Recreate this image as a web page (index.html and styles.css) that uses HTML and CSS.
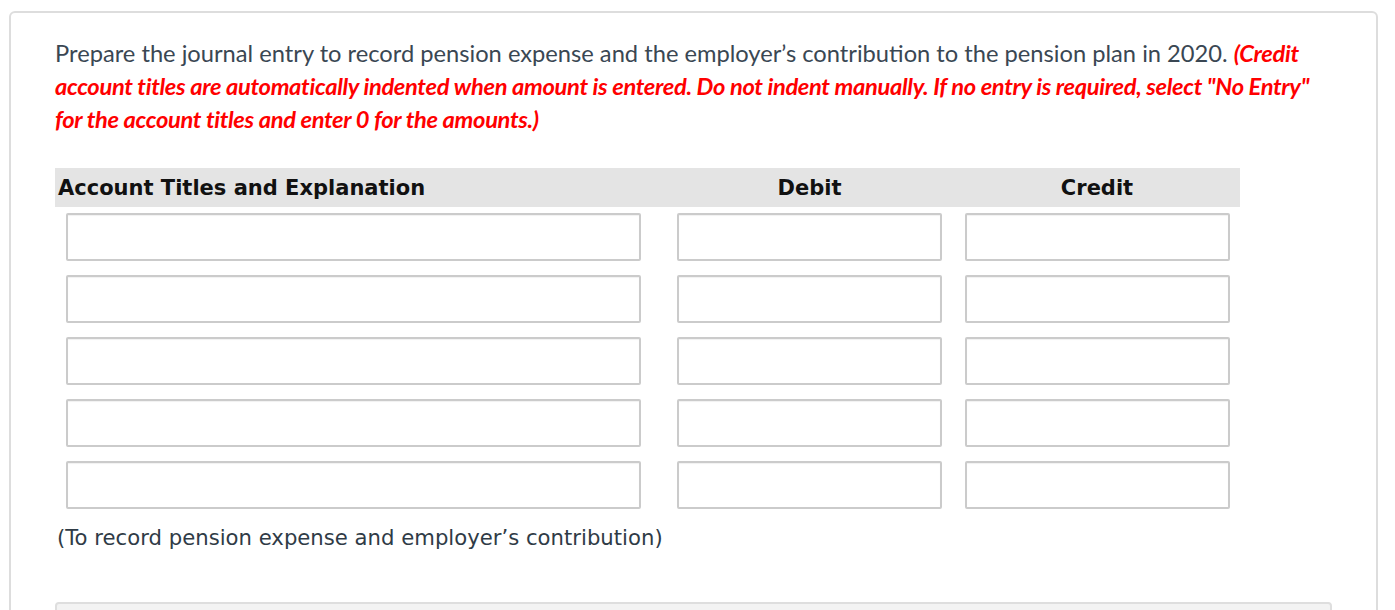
FILE: index.html
```html
<!DOCTYPE html>
<html>
<head>
<meta charset="utf-8">
<link rel="stylesheet" href="styles.css">
</head>
<body>
<div class="card">
  <p class="question">Prepare the journal entry to record pension expense and the employer’s contribution to the pension plan in 2020. <em class="note">(Credit account titles are automatically indented when amount is entered. Do not indent manually. If no entry is required, select "No Entry" for the account titles and enter 0 for the amounts.)</em></p>

  <div class="journal">
    <div class="head">
      <div class="h-acc">Account Titles and Explanation</div>
      <div class="h-num">Debit</div>
      <div class="h-num">Credit</div>
    </div>
    <div class="row"><div class="c-acc"><input class="field wide"></div><div class="c-num"><input class="field"></div><div class="c-num"><input class="field"></div></div>
    <div class="row"><div class="c-acc"><input class="field wide"></div><div class="c-num"><input class="field"></div><div class="c-num"><input class="field"></div></div>
    <div class="row"><div class="c-acc"><input class="field wide"></div><div class="c-num"><input class="field"></div><div class="c-num"><input class="field"></div></div>
    <div class="row"><div class="c-acc"><input class="field wide"></div><div class="c-num"><input class="field"></div><div class="c-num"><input class="field"></div></div>
    <div class="row"><div class="c-acc"><input class="field wide"></div><div class="c-num"><input class="field"></div><div class="c-num"><input class="field"></div></div>
  </div>

  <p class="explain">(To record pension expense and employer’s contribution)</p>

  <div class="next-box"></div>
</div>
</body>
</html>
```

FILE: styles.css
```css
html, body {
  margin: 0;
  padding: 0;
  background: #ffffff;
}
body {
  padding: 11px 0 0 9px;
  overflow: hidden;
  height: 599px;
}
.card {
  box-sizing: content-box;
  width: 1277px;
  border: 2px solid #dddddd;
  border-radius: 6px;
  padding: 24px 44px 0 44px;
  height: 700px;
}
.question {
  margin: 0;
  font-family: Lato, "Open Sans", sans-serif;
  font-size: 23.7px;
  line-height: 33px;
  color: #3a4753;
  width: 1277px;
}
.note {
  color: #ff0000;
  font-weight: 700;
  font-style: italic;
  letter-spacing: -0.33px;
}
.journal {
  margin-top: 32px;
  width: 1185px;
}
.head {
  display: grid;
  grid-template-columns: 604px 301px 274px;
  height: 39px;
  align-items: center;
  background: #e4e4e4;
  font-family: "DejaVu Sans", sans-serif;
  font-weight: 700;
  font-size: 21px;
  color: #111111;
}
.h-acc {
  padding-left: 3px;
}
.h-num {
  text-align: center;
}
.row {
  display: grid;
  grid-template-columns: 604px 301px 274px;
  margin-top: 6px;
}
.row + .row {
  margin-top: 14px;
}
.c-acc {
  padding-left: 11px;
}
.c-num {
  display: flex;
  justify-content: center;
}
.field {
  box-sizing: border-box;
  width: 265px;
  height: 48px;
  margin: 0;
  border: 2px solid #cbcbcb;
  border-radius: 2px;
  background: #ffffff;
  box-shadow: inset 0 1px 1px rgba(0, 0, 0, 0.06);
  display: block;
}
.field.wide {
  width: 575px;
}
.explain {
  margin: 17px 0 0 2px;
  font-family: "DejaVu Sans", sans-serif;
  font-size: 21.2px;
  line-height: 24px;
  color: #2f3b46;
}
.next-box {
  margin-top: 52px;
  height: 60px;
  background: #f3f3f3;
  border: 2px solid #dedede;
  border-radius: 4px;
}
```
